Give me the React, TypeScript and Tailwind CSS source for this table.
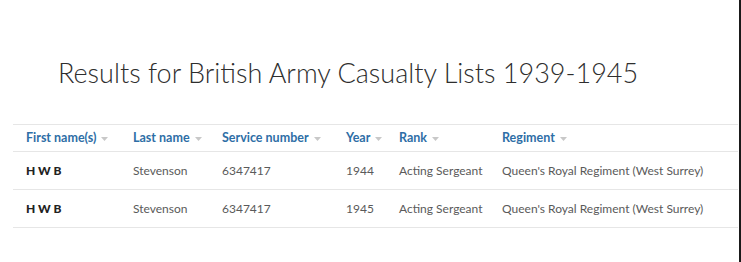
import React from 'react';

const columns = [
  { label: 'First name(s)', width: 'w-[107px]' },
  { label: 'Last name', width: 'w-[89px]' },
  { label: 'Service number', width: 'w-[124px]' },
  { label: 'Year', width: 'w-[53px]' },
  { label: 'Rank', width: 'w-[103px]' },
  { label: 'Regiment', width: 'flex-1' },
];

const rows = [
  { first: 'H W B', last: 'Stevenson', service: '6347417', year: '1944', rank: 'Acting Sergeant', regiment: "Queen's Royal Regiment (West Surrey)" },
  { first: 'H W B', last: 'Stevenson', service: '6347417', year: '1945', rank: 'Acting Sergeant', regiment: "Queen's Royal Regiment (West Surrey)" },
];

const Caret = () => (
  <svg width="7" height="4" viewBox="0 0 7 4" className="ml-[5px] mt-[1px]">
    <path d="M0 0 L7 0 L3.5 4 Z" fill="#c8c8c8" />
  </svg>
);

export default function App() {
  return (
    <div className="w-[741px] h-[262px] bg-white border-r-2 border-[#1a1a1a] font-['Lato',sans-serif] overflow-hidden">
      <h1 className="pl-[58px] pt-[57px] text-[27px] leading-[32px] font-light text-[#2e2e2e]">
        Results for British Army Casualty Lists 1939-1945
      </h1>
      <div className="ml-[13px] mt-[35px] mr-[1px]">
        <div className="flex items-center h-[28px] border-t border-b border-[#e6e6e6] pl-[13px]">
          {columns.map((c) => (
            <div key={c.label} className={`${c.width} flex items-center text-[12.5px] font-bold text-[#2e6ea6]`}>
              {c.label}
              <Caret />
            </div>
          ))}
        </div>
        {rows.map((r, i) => (
          <div key={i} className="flex items-center h-[38px] border-b border-[#e6e6e6] pl-[13px] text-[12px] text-[#5a5a5a]">
            <div className="w-[107px] font-black text-[#222]">{r.first}</div>
            <div className="w-[89px]">{r.last}</div>
            <div className="w-[124px]">{r.service}</div>
            <div className="w-[53px]">{r.year}</div>
            <div className="w-[103px]">{r.rank}</div>
            <div className="flex-1">{r.regiment}</div>
          </div>
        ))}
      </div>
    </div>
  );
}
